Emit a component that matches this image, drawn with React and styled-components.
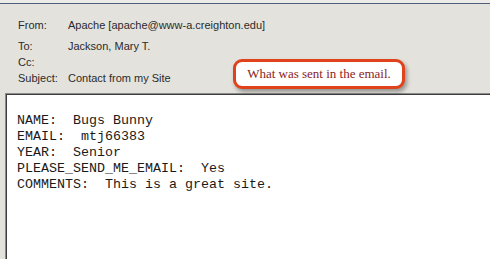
import React from 'react';
import styled, { createGlobalStyle } from 'styled-components';

const GlobalStyle = createGlobalStyle`
  html, body {
    margin: 0;
    padding: 0;
    background: #e3e2dd;
  }
`;

const Window = styled.div`
  position: relative;
  width: 490px;
  height: 259px;
  overflow: hidden;
  background: #e3e2dd;
  border-top: 3px solid #ecebe7;
  box-sizing: border-box;
  display: flex;
  flex-direction: column;
`;

const TopRule = styled.div`
  height: 1px;
  background: #4f5f7c;
`;

const Header = styled.div`
  display: grid;
  grid-template-columns: 50px 1fr;
  padding: 13px 0 7px 18px;
  font-family: 'Liberation Sans', Arial, sans-serif;
  font-size: 11px;
  line-height: 16px;
  color: #2b2b2b;
`;

const Label = styled.div`
  margin-bottom: ${(p) => (p.$gap ? '5px' : '0')};
  white-space: nowrap;
`;

const Value = styled.div`
  margin-bottom: ${(p) => (p.$gap ? '5px' : '0')};
  white-space: nowrap;
  min-height: 16px;
`;

const Callout = styled.div`
  position: absolute;
  left: 233px;
  top: 56px;
  width: 166px;
  height: 24px;
  border: 3px solid #e0431b;
  border-radius: 9px;
  background: #ffffff;
  box-shadow: 2px 3px 4px rgba(0, 0, 0, 0.35);
  display: flex;
  align-items: center;
  justify-content: center;
  font-family: 'Liberation Serif', 'DejaVu Serif', serif;
  font-size: 13px;
  color: #8c2424;
`;

const Body = styled.div`
  flex: 1;
  margin-left: 5px;
  background: #ffffff;
  border-top: 1px solid #8a8a8a;
  border-left: 1px solid #8a8a8a;
  box-shadow: inset 1px 1px 0 #3e3e3e;
  padding: 19px 0 0 11px;
`;

const Message = styled.pre`
  margin: 0;
  font-family: 'Liberation Mono', 'Courier New', monospace;
  font-size: 13.33px;
  line-height: 16px;
  color: #1a1a1a;
`;

const fields = [
  ['From:', 'Apache [apache@www-a.creighton.edu]'],
  ['To:', 'Jackson, Mary T.'],
  ['Cc:', ''],
  ['Subject:', 'Contact from my Site'],
];

const lines = [
  'NAME:  Bugs Bunny',
  'EMAIL:  mtj66383',
  'YEAR:  Senior',
  'PLEASE_SEND_ME_EMAIL:  Yes',
  'COMMENTS:  This is a great site.',
];

export default function App() {
  return (
    <>
      <GlobalStyle />
      <Window>
        <TopRule />
        <Header>
          {fields.map(([label, value], i) => (
            <React.Fragment key={label}>
              <Label $gap={i === 0}>{label}</Label>
              <Value $gap={i === 0}>{value}</Value>
            </React.Fragment>
          ))}
        </Header>
        <Body>
          <Message>{lines.join('\n')}</Message>
        </Body>
        <Callout>What was sent in the email.</Callout>
      </Window>
    </>
  );
}
